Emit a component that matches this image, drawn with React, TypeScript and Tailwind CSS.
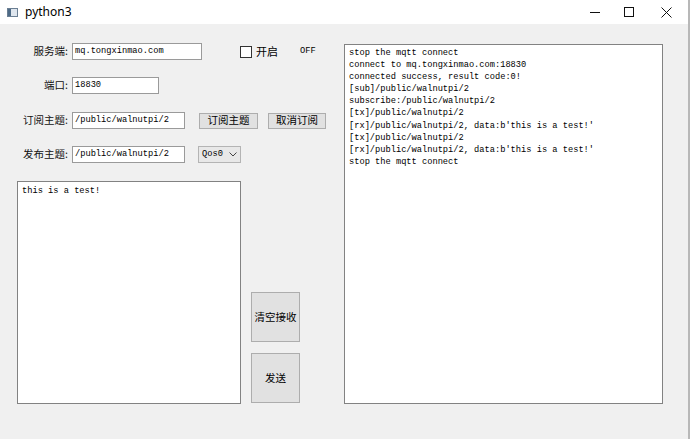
import React from "react";

const mono = { fontFamily: '"Liberation Mono", "DejaVu Sans Mono", monospace' };

const logLines = [
  "stop the mqtt connect",
  "connect to mq.tongxinmao.com:18830",
  "connected success, result code:0!",
  "[sub]/public/walnutpi/2",
  "subscribe:/public/walnutpi/2",
  "[tx]/public/walnutpi/2",
  "[rx]/public/walnutpi/2, data:b'this is a test!'",
  "[tx]/public/walnutpi/2",
  "[rx]/public/walnutpi/2, data:b'this is a test!'",
  "stop the mqtt connect",
];

function Label({ text }: { text: string }) {
  return (
    <div className="w-[68px] shrink-0 text-right text-[10.5px] text-[#111] leading-none">{text}</div>
  );
}

function Input({ value, w }: { value: string; w: string }) {
  return (
    <div
      className={`${w} h-[17px] ml-[4px] shrink-0 bg-white border border-[#9a9a9a] flex items-center pl-[2px] text-[8.7px] text-black leading-none whitespace-pre`}
      style={mono}
    >
      {value}
    </div>
  );
}

function Btn({ text, cls }: { text: string; cls: string }) {
  return (
    <div
      className={`${cls} shrink-0 bg-[#e1e1e1] border border-[#adadad] flex items-center justify-center text-[10.5px] text-black leading-none`}
    >
      {text}
    </div>
  );
}

export default function App() {
  return (
    <div
      className="w-[690px] h-[439px] bg-[#f0f0f0] flex flex-col overflow-hidden border-r-2 border-[#b8b8b8]"
      style={{ fontFamily: '"Noto Sans CJK SC", "Noto Sans", sans-serif' }}
    >
      {/* Title bar */}
      <div className="h-[24px] bg-white flex items-center shrink-0">
        <svg width="11" height="9" viewBox="0 0 11 9" className="ml-[7px]">
          <rect x="0.5" y="0.5" width="10" height="8" fill="#dfe6ee" stroke="#6b7f93" />
          <rect x="1" y="1" width="3" height="7" fill="#4d6a86" />
        </svg>
        <span className="ml-[7px] text-[12px] text-black" style={{ fontFamily: '"Noto Sans", sans-serif' }}>
          python3
        </span>
        <div className="flex-1" />
        <svg width="10" height="10" viewBox="0 0 10 10" className="mr-[24px]">
          <line x1="0" y1="5.5" x2="10" y2="5.5" stroke="#111" strokeWidth="1" />
        </svg>
        <svg width="10" height="10" viewBox="0 0 10 10" className="mr-[27px]">
          <rect x="0.5" y="0.5" width="9" height="9" fill="none" stroke="#111" strokeWidth="1" />
        </svg>
        <svg width="11" height="11" viewBox="0 0 11 11" className="mr-[16px]">
          <line x1="0.5" y1="0.5" x2="10.5" y2="10.5" stroke="#111" strokeWidth="1" />
          <line x1="10.5" y1="0.5" x2="0.5" y2="10.5" stroke="#111" strokeWidth="1" />
        </svg>
      </div>

      {/* Body */}
      <div className="flex flex-1">
        {/* Left panel */}
        <div className="w-[344px] shrink-0 flex flex-col pt-[19px]">
          {/* Row 1 */}
          <div className="flex items-center h-[17px]">
            <Label text="服务端:" />
            <Input value="mq.tongxinmao.com" w="w-[130px]" />
            <div className="ml-[38px] w-[12px] h-[12px] border border-[#333] bg-white shrink-0" />
            <span className="ml-[4px] text-[11px] leading-none">开启</span>
            <span className="ml-[22px] text-[8.7px] leading-none text-black" style={mono}>
              OFF
            </span>
          </div>
          {/* Row 2 */}
          <div className="flex items-center h-[17px] mt-[17px]">
            <Label text="端口:" />
            <Input value="18830" w="w-[87px]" />
          </div>
          {/* Row 3 */}
          <div className="flex items-center h-[17px] mt-[18px]">
            <Label text="订阅主题:" />
            <Input value="/public/walnutpi/2" w="w-[113px]" />
            <Btn text="订阅主题" cls="ml-[14px] w-[59px] h-[16px]" />
            <Btn text="取消订阅" cls="ml-[10px] w-[58px] h-[16px]" />
          </div>
          {/* Row 4 */}
          <div className="flex items-center h-[17px] mt-[17px]">
            <Label text="发布主题:" />
            <Input value="/public/walnutpi/2" w="w-[113px]" />
            <div className="ml-[13px] w-[43px] h-[17px] bg-[#e8e8e8] border border-[#b4b4b4] flex items-center pl-[3px] shrink-0">
              <span className="text-[8.7px] leading-none" style={mono}>
                Qos0
              </span>
              <svg width="8" height="5" viewBox="0 0 8 5" className="ml-[6px]">
                <polyline points="0.5,0.5 4,4 7.5,0.5" fill="none" stroke="#444" strokeWidth="1" />
              </svg>
            </div>
          </div>
          {/* Bottom row */}
          <div className="flex mt-[18px]">
            <div
              className="ml-[17px] w-[224px] h-[223px] bg-white border border-[#828282] pl-[4px] pt-[3px] text-[8.7px] leading-[12px] text-black whitespace-pre"
              style={mono}
            >
              this is a test!
            </div>
            <div className="ml-[10px] flex flex-col justify-end pb-[1px]">
              <Btn text="清空接收" cls="w-[49px] h-[50px]" />
              <Btn text="发送" cls="w-[49px] h-[50px] mt-[11px]" />
            </div>
          </div>
        </div>

        {/* Receive panel */}
        <div
          className="mt-[20px] w-[319px] h-[360px] bg-white border border-[#828282] pl-[4px] pt-[2px] text-[8.7px] leading-[12.1px] text-black shrink-0"
          style={mono}
        >
          {logLines.map((l, i) => (
            <div key={i} className="whitespace-pre">
              {l}
            </div>
          ))}
        </div>
      </div>
    </div>
  );
}
